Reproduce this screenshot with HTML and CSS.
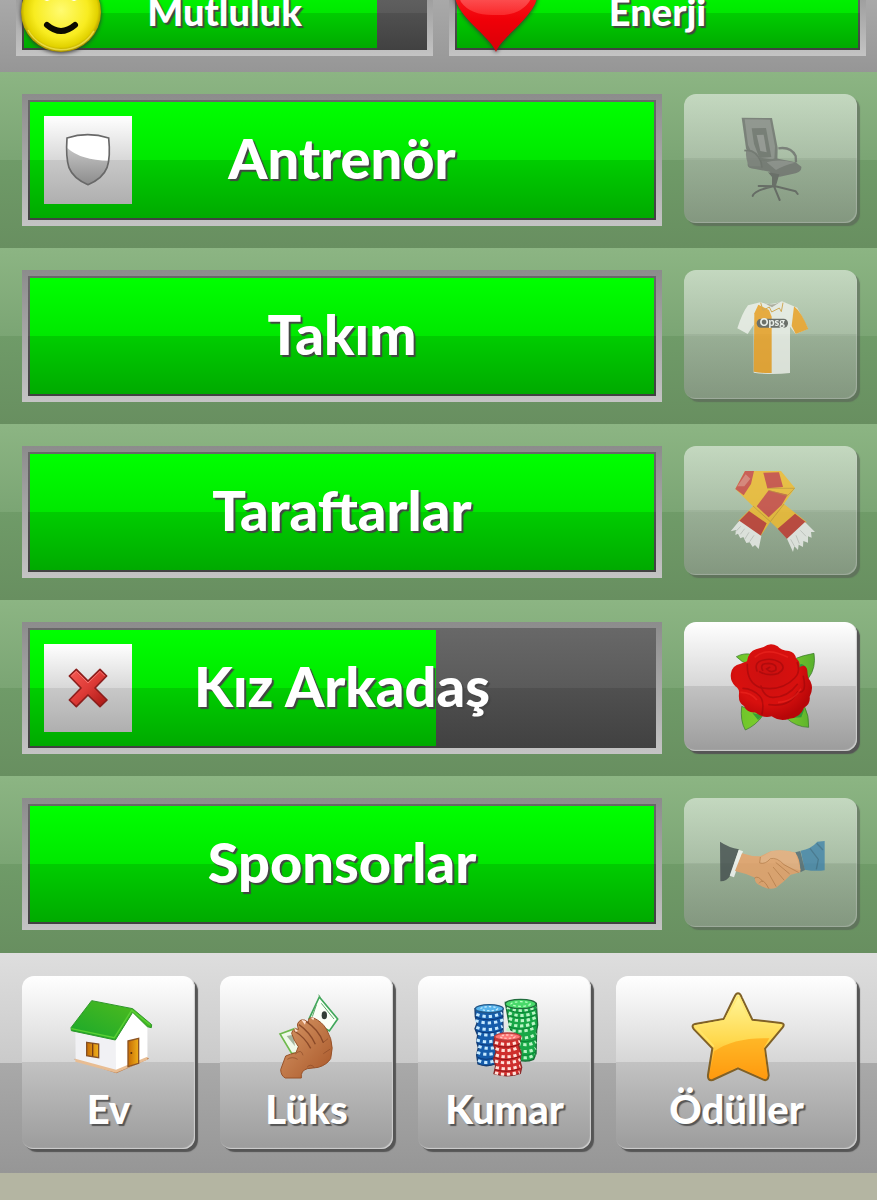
FILE: index.html
```html
<!DOCTYPE html>
<html lang="tr">
<head>
<meta charset="utf-8">
<meta name="viewport" content="width=device-width, initial-scale=1">
<title>İlişkiler</title>
<link rel="stylesheet" href="styles.css">
</head>
<body>
<header class="panel vitals">
  <div class="meter meter-small">
    <div class="track">
      <div class="fill" style="width:88%"></div>
      <span class="name">Mutluluk</span>
    </div>
    <svg class="badge" viewBox="0 0 84 84" aria-hidden="true">
      <defs><radialGradient id="face" cx=".5" cy=".48" r=".52"><stop offset="0" stop-color="#fffb70"/><stop offset=".65" stop-color="#f8ec20"/><stop offset=".88" stop-color="#e2d200"/><stop offset="1" stop-color="#a89000"/></radialGradient></defs>
      <circle cx="41" cy="42" r="40" fill="url(#face)"/>
      <path d="M8 60A38 38 0 0 0 74 61" fill="none" stroke="#fff36b" stroke-width="1.5" opacity=".6"/>
      <ellipse cx="27" cy="21" rx="7" ry="10" fill="#fff"/><ellipse cx="54" cy="21" rx="7" ry="10" fill="#fff"/>
      <ellipse cx="27" cy="20" rx="4" ry="8"/><ellipse cx="54" cy="20" rx="4" ry="8"/>
      <path d="M27 55Q41 67 55 55" fill="none" stroke="#0b0b00" stroke-width="6" stroke-linecap="round"/>
    </svg>
  </div>
  <div class="meter meter-small">
    <div class="track">
      <div class="fill" style="width:100%"></div>
      <span class="name">Enerji</span>
    </div>
    <svg class="badge" viewBox="0 0 84 84" aria-hidden="true">
      <defs>
        <linearGradient id="heart" x2="0" y2="1"><stop offset="0" stop-color="#ff3030"/><stop offset=".6" stop-color="#f00008"/><stop offset="1" stop-color="#d80008"/></linearGradient>
        <linearGradient id="shine" x2="0" y2="1"><stop offset="0" stop-color="#ffb0b0"/><stop offset="1" stop-color="#ff3c3c"/></linearGradient>
      </defs>
      <path d="M43 82C38 68 14 54 4 34C-4 14 10 0 24 2Q38 4 43 16Q48 4 62 2C76 0 90 14 82 34C72 54 48 68 43 82Z" fill="url(#heart)"/>
      <path d="M8 32C0 14 18 4 28 8Q39 11 43 22Q50 8 60 8C74 8 84 20 76 32Q66 46 43 45Q18 46 8 32Z" fill="url(#shine)" opacity=".65"/>
    </svg>
  </div>
</header>

<main class="relations">
  <section class="row">
    <div class="meter">
      <div class="track">
        <div class="fill" style="width:100%"></div>
        <span class="status"><svg viewBox="0 0 264 264" role="img" aria-label="Kalkan">
          <defs><linearGradient id="steel" x2="0" y2="1"><stop offset="0" stop-color="#c4c4c4"/><stop offset="1" stop-color="#8c8c8c"/></linearGradient></defs>
          <path d="M69 66Q131 46 194 66Q200 124 189 155Q176 188 132 206Q88 188 75 155Q65 124 69 66Z" fill="#fff"/>
          <path d="M70 96Q110 133 195 134Q196 140 189 155Q176 188 132 206Q88 188 75 155Q68 130 70 96Z" fill="url(#steel)"/>
          <path d="M69 66Q131 46 194 66Q200 124 189 155Q176 188 132 206Q88 188 75 155Q65 124 69 66Z" fill="none" stroke="#686868" stroke-width="5"/>
        </svg></span>
        <span class="name">Antrenör</span>
      </div>
    </div>
    <button class="tile" type="button" disabled aria-label="Antrenör">
      <svg viewBox="10 27 519 387" aria-hidden="true">
        <path d="M183 98L274 99L291 188L290 230L275 234L214 226L196 190Z" fill="#686b68"/>
        <path d="M192 103L268 104L283 184L281 224L219 215L202 180Z" fill="#858785"/>
        <path d="M213 130L256 129L272 216L236 219L220 176Z" fill="#646764"/>
        <path d="M228 150L249 149L258 202L239 198Z" fill="#8d8d8d"/>
        <path d="M293 190Q331 184 345 213L346 232" fill="none" stroke="#6a6c6a" stroke-width="7"/>
        <path d="M201 238Q199 250 223 252L267 260Q276 278 298 275L345 265Q364 260 362 245L345 232L285 220L248 229L202 220Z" fill="#6c6e6c"/>
        <path d="M258 232Q290 220 344 233Q310 240 286 255Z" fill="#888988"/>
        <path d="M196 198L214 196Q238 206 246 244L206 244Q194 222 196 198Z" fill="#757775"/>
        <path d="M191 197Q224 190 241 231L244 248" fill="none" stroke="#626462" stroke-width="5"/>
        <path d="M216 333Q220 316 281 303L345 319L351 327M234 303L280 304L297 345" fill="none" stroke="#5a5c5a" stroke-width="6" stroke-linecap="round" stroke-linejoin="round"/>
        <path d="M262 262L296 268L286 302H274L274 276Z" fill="#5c5e5c"/>
      </svg>
    </button>
  </section>

  <section class="row">
    <div class="meter">
      <div class="track">
        <div class="fill" style="width:100%"></div>
        <span class="name">Takım</span>
      </div>
    </div>
    <button class="tile" type="button" disabled aria-label="Takım">
      <svg viewBox="10 30 519 387" aria-hidden="true">
        <path d="M239 127L202 136Q184 160 170 205L201 222L219 194V338Q273 346 328 339V200L345 222L382 206L350 143L304 124Q270 138 239 127Z" fill="#f4f6f2"/>
        <path d="M233 134L265 150L273 170V339Q244 340 219 335L221 160Z" fill="#f8a21c"/>
        <path d="M340 139Q361 155 383 207L345 222L333 198Z" fill="#f8a21c"/>
        <path d="M240 128L247 151L266 141L273 156L296 144L302 155L307 128" fill="none" stroke="#d9a03a" stroke-width="3"/>
        <path d="M243 125Q272 142 302 124L274 142Z" fill="#aaa79b"/>
        <rect x="228" y="176" width="94" height="27" rx="13" fill="#555"/>
        <text x="275" y="199" class="shirt-text" text-anchor="middle">Opsg</text>
      </svg>
    </button>
  </section>

  <section class="row">
    <div class="meter">
      <div class="track">
        <div class="fill" style="width:100%"></div>
        <span class="name">Taraftarlar</span>
      </div>
    </div>
    <button class="tile" type="button" disabled aria-label="Taraftarlar">
      <svg viewBox="10 36 519 387" aria-hidden="true">
        <path d="M193 111H301L343 162L310 210L378 264L324 315L269 263L240 306L173 260L217 217L164 165Z" fill="#f8bb24"/>
        <path d="M193 111H220L211 150L189 184L164 165Z" fill="#cf3c38"/>
        <path d="M195 121L209 134L191 157L170 157Z" fill="#e0746c"/>
        <path d="M248 116L295 115L307 159L260 163Z" fill="#cd3a34"/>
        <path d="M264 169L321 182L303 213L264 250L228 217Z" fill="#cf3c37"/>
        <path d="M205 231L258 268L239 307L173 263ZM343 239L376 265L320 316L291 284Z" fill="#c42c26"/>
        <path d="M260 163H342L320 185L264 169M217 216L269 263L310 210" fill="none" stroke="#b98a1c" stroke-width="2"/>
        <path d="M176 260L242 306L234 345L223 333L216 339L207 325L197 327L188 309L179 313L172 299L164 303L166 288L150 292ZM319 314L373 264L403 294L391 294L393 311L382 307L382 326L368 321L367 339L354 332L352 348L341 337L337 354Z" fill="#f4f4f4"/>
        <path d="M180 277L165 293M192 284L179 301M205 295L192 316M220 304L207 323M330 316L341 336M346 304L356 329M359 289L376 307" stroke="#ccc" stroke-width="3"/>
      </svg>
    </button>
  </section>

  <section class="row">
    <div class="meter">
      <div class="track">
        <div class="fill" style="width:65%"></div>
        <span class="status"><svg viewBox="0 0 264 264" role="img" aria-label="Yok">
          <defs><linearGradient id="cross" x2="1" y2="1"><stop offset="0" stop-color="#f65b55"/><stop offset=".5" stop-color="#dd3a36"/><stop offset="1" stop-color="#a51512"/></linearGradient></defs>
          <path d="M97 76L132 111L168 76L188 96L153 132L189 168L168 188L132 153L97 188L76 168L111 132L76 96Z" fill="url(#cross)" stroke="#8b1e1c" stroke-width="5" stroke-linejoin="round"/>
          <path d="M82 96L97 82L132 117L168 82L182 96" fill="none" stroke="#ff8580" stroke-width="3" opacity=".7"/>
        </svg></span>
        <span class="name">Kız Arkadaş</span>
      </div>
    </div>
    <button class="tile" type="button" aria-label="Kız Arkadaş: gül">
      <svg viewBox="10 39 519 387" aria-hidden="true">
        <defs>
          <linearGradient id="leaf" x2="1"><stop offset="0" stop-color="#6cc42a"/><stop offset=".5" stop-color="#86d22e"/><stop offset="1" stop-color="#58b02c"/></linearGradient>
          <radialGradient id="rose" cx=".45" cy=".4" r=".6"><stop offset="0" stop-color="#cc1010"/><stop offset=".65" stop-color="#d8100e"/><stop offset="1" stop-color="#b70608"/></radialGradient>
        </defs>
        <path d="M167 143Q190 130 216 137L205 165L185 158ZM343 149Q367 139 400 133Q407 177 383 208L350 180ZM183 292Q178 336 194 363Q225 350 247 319ZM318 328Q346 354 384 355Q386 320 371 291Z" fill="url(#leaf)" stroke="#36732a" stroke-width="2"/>
        <path d="M350 180L360 165Q380 165 383 208ZM215 312L247 319L232 333ZM318 328L350 306L371 300L362 325Z" fill="#1d8a3a" opacity=".7"/>
        <path d="M249 114Q269 99 291 112Q300 124 325 126Q343 130 346 148Q360 158 356 175Q375 162 380 184Q379 205 389 216Q400 239 387 263Q390 286 370 296Q360 325 326 329Q298 339 273 322Q246 329 223 310Q199 312 190 291Q172 282 175 254Q177 240 164 232Q147 215 151 193Q154 169 180 164L199 157Q204 127 226 121Z" fill="url(#rose)"/>
        <g fill="none" stroke="#8d0509" stroke-width="5" opacity=".45" stroke-linecap="round">
          <path d="M200 166Q198 221 239 236Q303 248 342 207Q360 190 350 161"/>
          <path d="M229 186Q219 159 249 153Q276 146 299 161Q318 178 293 193Q262 203 237 188M246 184Q235 163 264 163Q291 165 285 184Q270 193 258 180L267 175"/>
          <path d="M187 238Q216 239 237 261Q252 277 244 315M241 231Q251 267 279 265Q321 265 350 226M265 287Q325 296 351 249Q380 255 368 202"/>
        </g>
        <path d="M222 145Q258 112 322 145M179 250Q210 249 229 273M292 280Q337 279 361 239" fill="none" stroke="#f42c23" stroke-width="5" opacity=".5"/>
      </svg>
    </button>
  </section>

  <section class="row">
    <div class="meter">
      <div class="track">
        <div class="fill" style="width:100%"></div>
        <span class="name">Sponsorlar</span>
      </div>
    </div>
    <button class="tile" type="button" disabled aria-label="Sponsorlar">
      <svg viewBox="10 27 519 387" aria-hidden="true">
        <path d="M118 158Q145 176 175 181L148 261Q137 278 119 277Z" fill="#3c4648"/>
        <path d="M174 182L187 187L160 265L147 260Z" fill="#fff"/>
        <path d="M360 185Q391 180 410 158L432 156V244Q405 248 372 242Z" fill="#3a80aa"/>
        <path d="M388 178L413 211L407 241M408 163L427 183" fill="none" stroke="#2b6488" stroke-width="4"/>
        <path d="M344 190L359 186L373 243L359 250Z" fill="#4a6470"/>
        <path d="M184 193Q213 203 239 202L270 187Q309 181 344 191Q360 211 359 250L330 257L310 277L286 296Q265 305 241 290Q220 284 223 266L196 255L163 246Z" fill="#efa064"/>
        <path d="M239 206L273 186Q312 180 345 192L360 244Q325 241 294 214Q269 204 256 221L238 222Z" fill="#f2ae7a"/>
        <path d="M239 205L237 222Q254 227 269 209Q289 204 310 227L353 250M286 221L326 254M278 235L310 273M263 251L286 292M222 267Q232 258 246 277M236 282Q247 263 264 298" fill="none" stroke="#b8692f" stroke-width="3" stroke-linecap="round" opacity=".7"/>
      </svg>
    </button>
  </section>
</main>

<nav class="panel menu" aria-label="Menü">
  <button class="tile menu-item" type="button">
    <svg viewBox="181 115 288 288" aria-hidden="true">
      <defs><linearGradient id="roof" x1="0" y1="1" x2="1" y2="0"><stop offset="0" stop-color="#18a82c"/><stop offset="1" stop-color="#55bd1c"/></linearGradient><linearGradient id="wood"><stop offset="0" stop-color="#c56b05"/><stop offset="1" stop-color="#efb01b"/></linearGradient></defs>
      <path d="M219 325L347 368L445 324L435 315Z" fill="#ba7b48"/>
      <path d="M224 235L225 330L346 362L440 322V222L397 182L345 263Z" fill="#f1f1f4"/>
      <path d="M345 262L397 184L440 223V322L346 362Z" fill="#fff"/>
      <path d="M224 324L346 357L440 318V327L346 366L224 333Z" fill="#e8bd93"/>
      <path d="M273 150L396 174L453 222L452 231L440 228L396 185L344 268L212 240L211 231Z" fill="url(#roof)" stroke="#2f972a" stroke-width="3"/>
      <path d="M212 234L341 261L393 179L448 222" fill="none" stroke="#5ad034" stroke-width="4"/>
      <path d="M258 275L294 280V321L258 315Z" fill="url(#wood)" stroke="#865126" stroke-width="4"/><path d="M276 278V317" stroke="#793d12" stroke-width="4"/>
      <path d="M382 271L414 263V338L382 348Z" fill="url(#wood)" stroke="#8c5425" stroke-width="4"/><circle cx="392" cy="307" r="3" fill="#532b0b"/>
    </svg>
    <span class="label">Ev</span>
  </button>
  <button class="tile menu-item" type="button">
    <svg viewBox="775 115 288 288" aria-hidden="true">
      <defs><linearGradient id="skin" x2="1" y2="1"><stop offset="0" stop-color="#d89968"/><stop offset="1" stop-color="#a85628"/></linearGradient></defs>
      <path d="M956 139L1011 205L986 241L925 205Z" fill="#fafff7" stroke="#40a75a" stroke-width="5"/>
      <ellipse cx="971" cy="194" rx="8" ry="12" fill="#333e36"/>
      <path d="M954 132L960 142M947 163L935 198M962 158L1000 205" stroke="#61aa6b" stroke-width="3"/>
      <path d="M838 250L882 234L900 307L873 308Z" fill="#eff9e9" stroke="#6eb94c" stroke-width="5"/>
      <path d="M858 256L878 252L883 287Z" fill="#a4b59e"/>
      <path d="M840 357L855 316Q869 310 886 306L893 288Q879 269 873 248Q877 230 894 236Q884 218 901 208Q911 204 924 216Q920 199 937 201Q965 213 978 237L990 264Q999 291 990 324Q979 342 953 350L920 354Q899 360 902 382L854 382Q841 376 840 357Z" fill="url(#skin)" stroke="#985229" stroke-width="3"/>
      <path d="M881 241Q913 260 930 293M895 222Q929 246 944 281M917 213Q954 237 968 276" fill="none" stroke="#7c3d20" stroke-width="4" opacity=".8"/>
      <path d="M884 310Q902 293 907 314M919 350Q930 337 941 351M982 264L967 276M989 295L968 309M860 326Q875 316 891 326" fill="none" stroke="#7c3d20" stroke-width="3" opacity=".5"/>
      <path d="M880 231L892 241L885 244ZM902 207L916 211L913 222ZM930 201L941 200L938 209Z" fill="#ffe2d3"/>
    </svg>
    <span class="label">Lüks</span>
  </button>
  <button class="tile menu-item" type="button">
    <svg viewBox="172 115 288 288" aria-hidden="true">
      <path d="M317 155L331 236L353 250L354 326Q376 337 402 326L409 309L411 239L414 223L410 158Z" fill="#18a747" stroke="#196c37" stroke-width="4"/>
      <path d="M322 170Q364 190 410 169M327 187Q366 204 413 183M328 203Q366 219 413 199M326 219Q366 235 413 214M321 235Q360 250 408 230M340 257Q380 270 411 249M353 278Q386 288 409 273M354 298Q385 309 408 293M354 317Q384 328 406 311" fill="none" stroke="#baf6c6" stroke-width="9" stroke-dasharray="10 8"/>
      <path d="M325 177Q365 195 409 176M331 195Q370 212 412 191M327 228Q366 245 410 224M344 268Q384 279 410 264M353 310Q386 320 407 304" fill="none" stroke="#0b8336" stroke-width="3"/>
      <ellipse cx="363" cy="160" rx="46" ry="14" fill="#48d96a" stroke="#206b3c" stroke-width="4"/><ellipse cx="363" cy="160" rx="29" ry="7" fill="none" stroke="#b8ffc1" stroke-width="4" stroke-dasharray="8 7"/>
      <path d="M226 174L227 198L232 218L226 234L234 254L231 273L236 291L231 313L235 340Q260 351 290 339L311 313L309 174Z" fill="#155cab" stroke="#173d70" stroke-width="4"/>
      <path d="M230 191Q268 206 308 187M227 210Q269 225 313 207M230 230Q268 244 309 227M235 248Q273 260 310 243M231 268Q267 280 306 264M236 287Q265 298 293 289M232 305Q260 316 288 307M235 329Q260 341 285 330" fill="none" stroke="#c5e9ff" stroke-width="9" stroke-dasharray="10 9"/>
      <path d="M229 200Q269 217 311 197M230 240Q270 255 309 236M232 278Q268 290 303 276M234 320Q259 332 286 320" fill="none" stroke="#0b3779" stroke-width="3"/>
      <ellipse cx="269" cy="174" rx="42" ry="12" fill="#57b4ed" stroke="#245889" stroke-width="4"/><ellipse cx="269" cy="174" rx="25" ry="6" fill="none" stroke="#c2eaff" stroke-width="4" stroke-dasharray="7 6"/>
      <path d="M285 258L282 283L289 303L282 325L288 346L283 369Q322 382 362 368L366 350L361 332L364 306L357 286L363 259Z" fill="#cf2f2d" stroke="#8d2929" stroke-width="4"/>
      <path d="M286 275Q323 288 361 272M288 294Q322 307 357 290M288 313Q324 326 362 309M286 331Q323 343 362 327M288 350Q324 360 362 346M286 366Q321 377 360 364" fill="none" stroke="#ffe0d8" stroke-width="9" stroke-dasharray="10 8"/>
      <path d="M284 284Q324 296 359 281M285 321Q321 334 361 317M286 357Q322 368 361 354" fill="none" stroke="#8d1116" stroke-width="3"/>
      <ellipse cx="324" cy="258" rx="39" ry="11" fill="#ff7775" stroke="#ba3d3c" stroke-width="4"/><ellipse cx="324" cy="258" rx="22" ry="5" fill="none" stroke="#ffc5bd" stroke-width="4" stroke-dasharray="7 6"/>
    </svg>
    <span class="label">Kumar</span>
  </button>
  <button class="tile menu-item menu-wide" type="button">
    <svg viewBox="868 115 288 288" aria-hidden="true">
      <defs><linearGradient id="gold" x2="0" y2="1"><stop offset="0" stop-color="#fff79d"/><stop offset=".55" stop-color="#ffd84c"/><stop offset="1" stop-color="#ff9110"/></linearGradient></defs>
      <path d="M1015 128Q1022 128 1026 140L1058 207L1144 217Q1157 219 1149 230L1096 294L1107 374Q1105 393 1091 387L1015 353L939 388Q923 391 925 373L938 293L883 236Q873 223 886 220L972 205L1004 139Q1009 128 1015 128Z" fill="url(#gold)" stroke="#806127" stroke-width="6" stroke-linejoin="round"/>
      <path d="M944 302Q1003 260 1109 263L1093 290L1104 374Q1102 389 1090 382L1015 348L938 383Q927 384 930 370Z" fill="#ff9f0b" opacity=".6"/>
      <path d="M1015 136L975 210L887 226L943 288M1018 136L1053 213L1144 224" fill="none" stroke="#ffe66b" stroke-width="5" opacity=".8"/>
    </svg>
    <span class="label">Ödüller</span>
  </button>
</nav>
</body>
</html>
```
FILE: styles.css
```css
* {
  box-sizing: border-box;
}

body {
  margin: 0;
  background: #b4b5a2;
  color: #fff;
  font-family: Lato, "Open Sans", sans-serif;
  font-weight: 900;
}

.panel {
  display: flex;
  background: linear-gradient(#dedede, #cacaca 50%, #a9a9a9 50%, #969696);
}

/* The header is scrolled partly out of view. */
.vitals {
  gap: 16px;
  margin-top: -46px;
  padding: 16px 11px 16px 16px;
  background: linear-gradient(#cacaca, #b8b8b8 38%, #a9a9a9 38%, #969696);
}

.relations {
  border-bottom: 1px solid #688f60;
}

.row {
  display: flex;
  gap: 22px;
  padding: 22px 17px 22px 22px;
  background: linear-gradient(#8cb583, #7ba574 50%, #6f9b68 50%, #688f60);
}

.meter {
  position: relative;
  display: flex;
  flex: 1;
  height: 132px;
  padding: 6px;
  background: linear-gradient(#8c8c8c, #c4c4c4);
}

.meter-small {
  height: 86px;
}

.track {
  position: relative;
  display: flex;
  flex: 1;
  align-items: center;
  justify-content: center;
  border: 2px solid transparent;
  background: linear-gradient(#686868, #5a5a5a 50%, #505050 50%, #414141) border-box;
}

.fill {
  position: absolute;
  inset: 0 auto 0 0;
  background: linear-gradient(#00ff00, #00e800 50%, #00cd00 50%, #00aa00);
}

.name {
  position: relative;
  padding-bottom: 4px;
  font-size: 56px;
  line-height: 64px;
  text-shadow: 2px 2px 1px #444;
}

.meter-small .name {
  font-size: 38px;
  line-height: 48px;
}

.badge {
  position: absolute;
  top: 0;
  left: 4px;
  width: 84px;
  height: 84px;
  filter: drop-shadow(0 1px 2px #333);
}

.status {
  position: absolute;
  top: 14px;
  left: 14px;
  width: 88px;
  height: 88px;
  background: linear-gradient(#fff, #d8d8d8 50%, #c8c8c8 50%, #afafaf);
}

.status svg {
  display: block;
}

.tile {
  width: 173px;
  height: 129px;
  margin: 0 3px 3px 0;
  padding: 0;
  border: 0;
  border-radius: 12px;
  background: linear-gradient(#fff, #d6d6d6 50%, #c2c2c2 50%, #9c9c9c);
  box-shadow: 3px 3px 1px #555, inset -1px -1px 1px #d0d0d0;
  color: inherit;
  font: inherit;
}

.tile svg {
  display: block;
  width: 100%;
}

.tile:disabled {
  background: linear-gradient(#ffffff80, #d6d6d680 50%, #c2c2c280 50%, #9c9c9c80);
  box-shadow: 3px 3px 1px #55555580, inset -1px -1px 1px #d0d0d060;
}

.tile:disabled svg {
  opacity: 0.75;
}

.shirt-text {
  fill: #fff;
  font-size: 32px;
}

.menu {
  gap: 22px;
  padding: 23px 17px 21px 22px;
}

.menu-item {
  display: flex;
  flex-direction: column;
  align-items: center;
  height: 173px;
  padding-top: 13px;
}

.menu-item svg {
  width: 96px;
  height: 96px;
}

.menu-wide {
  flex: 1;
}

.label {
  font-size: 40px;
  line-height: 48px;
  text-shadow: 2px 2px 1px #555;
}
```
